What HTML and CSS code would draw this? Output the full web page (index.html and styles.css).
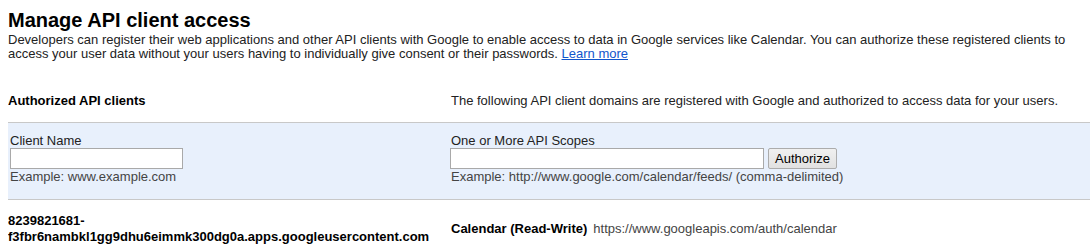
FILE: index.html
```html
<!DOCTYPE html>
<html>
<head>
<meta charset="utf-8">
<link rel="stylesheet" href="styles.css">
</head>
<body>
<h1 class="title">Manage API client access</h1>
<p class="desc">Developers can register their web applications and other API clients with Google to enable access to data in Google services like Calendar. You can authorize these registered clients to access your user data without your users having to individually give consent or their passwords. <a href="#" class="link">Learn more</a></p>

<div class="row head-row">
  <div class="col-left strong">Authorized API clients</div>
  <div class="col-right">The following API client domains are registered with Google and authorized to access data for your users.</div>
</div>

<div class="row form-row">
  <div class="col-left field">
    <label class="label">Client Name</label>
    <input class="input input-name" type="text">
    <div class="hint">Example: www.example.com</div>
  </div>
  <div class="col-right field">
    <label class="label">One or More API Scopes</label>
    <div class="inline">
      <input class="input input-scope" type="text">
      <button class="btn">Authorize</button>
    </div>
    <div class="hint">Example: http://www.google.com/calendar/feeds/ (comma-delimited)</div>
  </div>
</div>

<div class="row client-row">
  <div class="col-left strong client-id">8239821681-<br>f3fbr6nambkl1gg9dhu6eimmk300dg0a.apps.googleusercontent.com</div>
  <div class="col-right scope"><span class="strong">Calendar (Read-Write)</span><span class="scope-url">https://www.googleapis.com/auth/calendar</span></div>
</div>
</body>
</html>
```

FILE: styles.css
```css
html, body {
  margin: 0;
  padding: 0;
  background: #fff;
}
body {
  margin: 0 0 0 8px;
  font-family: "Liberation Sans", Arial, sans-serif;
  font-size: 13px;
  color: #000;
}
.title {
  margin: 0;
  padding-top: 8px;
  font-size: 20px;
  font-weight: bold;
  line-height: 24px;
}
.desc {
  margin: 1px 0 0 0;
  line-height: 14px;
  color: #222;
  padding-right: 8px;
}
.link {
  color: #15c;
  text-decoration: underline;
}
.row {
  display: grid;
  grid-template-columns: 443px 1fr;
}
.head-row {
  margin-top: 32px;
  line-height: 16px;
  padding: 0 0 13px 0;
  color: #222;
}
.strong {
  font-weight: bold;
  color: #000;
}
.form-row {
  background: #e8f0fc;
  border-top: 1px solid #c8c8c8;
  border-bottom: 1px solid #c8c8c8;
  padding: 11px 0 15px 0;
}
.field {
  display: flex;
  flex-direction: column;
  align-items: flex-start;
}
.form-row .col-left {
  padding-left: 2px;
}
.label {
  color: #222;
  line-height: 14px;
}
.input {
  box-sizing: border-box;
  height: 21px;
  border: 1px solid #a9a9a9;
  background: #fff;
  margin: 0;
  padding: 1px 2px;
  font: inherit;
}
.input-name {
  width: 173px;
}
.input-scope {
  width: 314px;
}
.inline {
  display: flex;
  gap: 4px;
  margin-left: -1px;
}
.btn {
  box-sizing: border-box;
  height: 21px;
  padding: 0 6px;
  border: 1px solid #acacac;
  border-radius: 2px;
  background: linear-gradient(#f0f0f0, #e1e1e1);
  font-family: "Liberation Sans", Arial, sans-serif;
  font-size: 13px;
  color: #000;
}
.hint {
  color: #444;
  line-height: 15px;
}
.client-row {
  padding-top: 13px;
  align-items: center;
  line-height: 16px;
}
.scope {
  color: #444;
}
.scope-url {
  margin-left: 6px;
}
```
